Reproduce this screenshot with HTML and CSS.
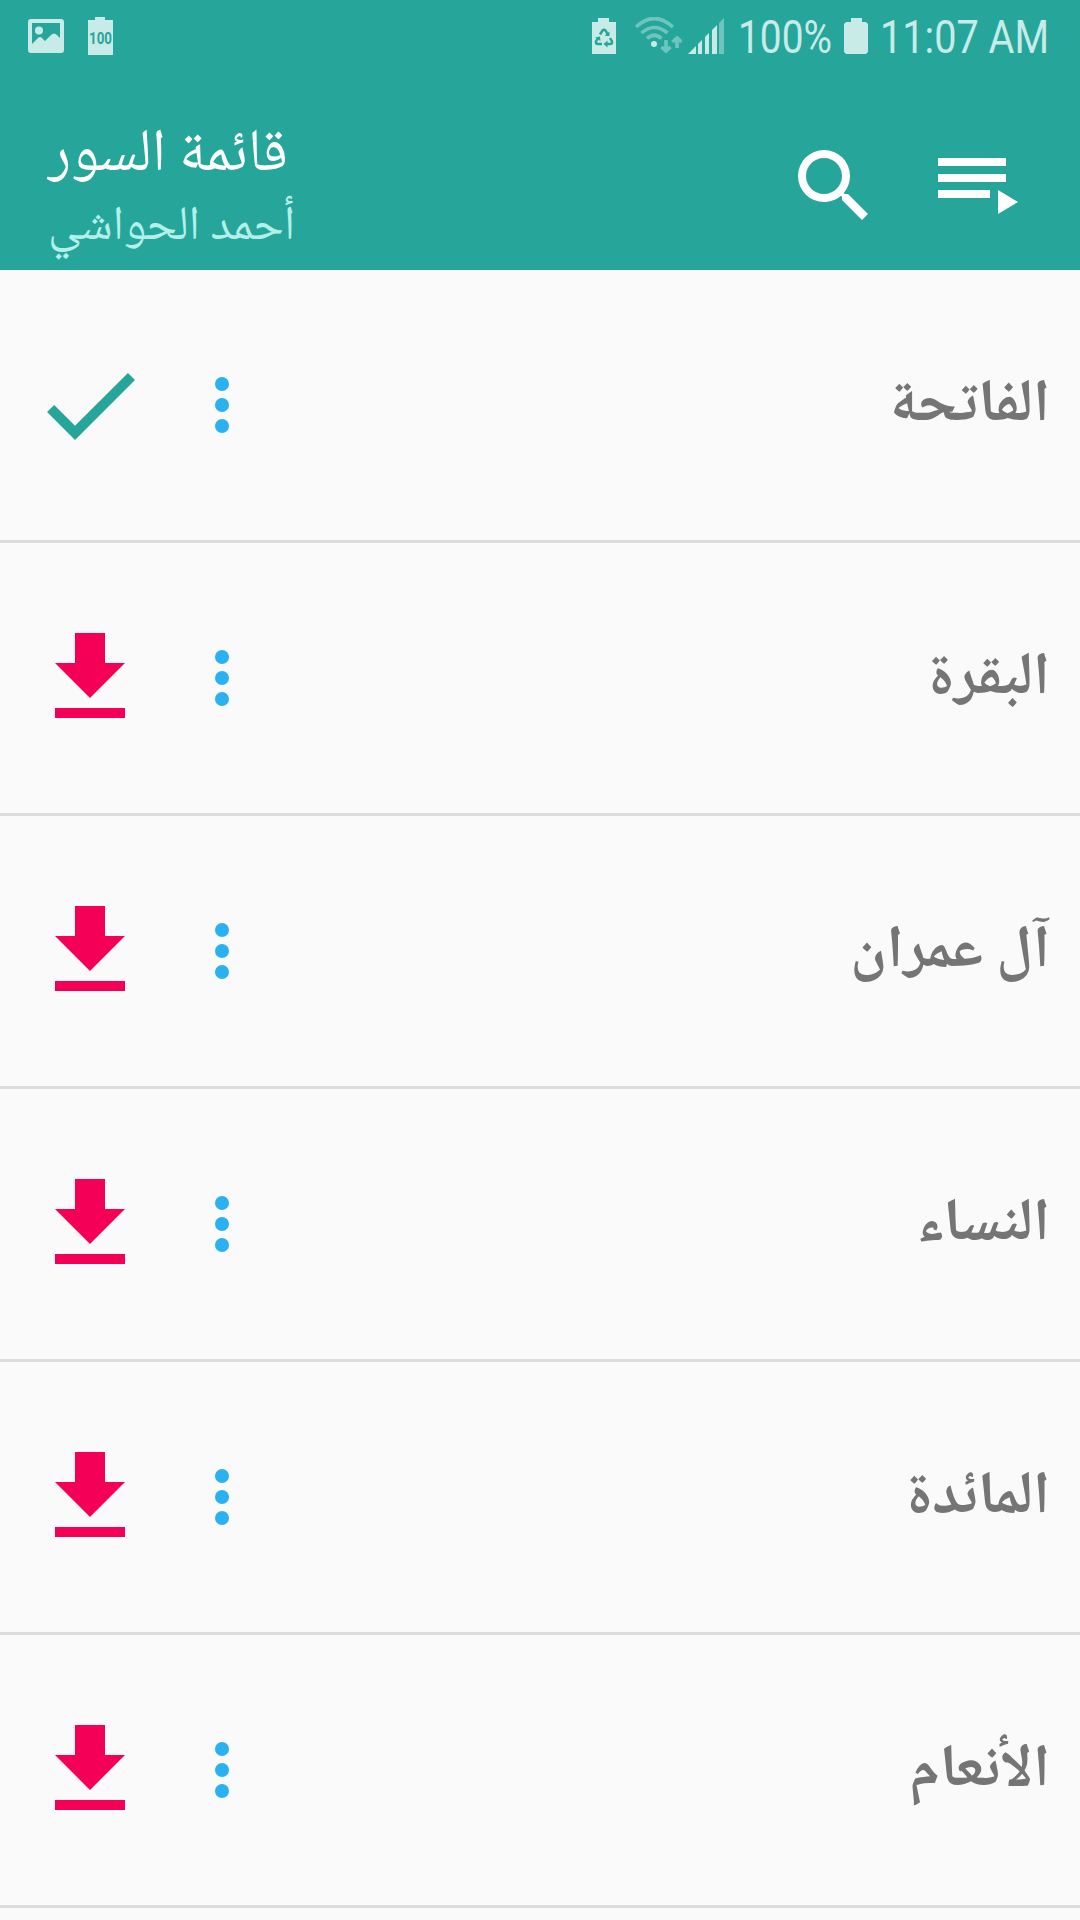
FILE: index.html
```html
<!DOCTYPE html>
<html lang="ar">
<head>
    <meta charset="UTF-8">
    <meta name="viewport" content="width=device-width, initial-scale=1.0">
    <title>قائمة السور</title>
    <link rel="stylesheet" href="styles.css">
</head>
<body>
    <header class="header">
        <div class="status-bar">
            <svg class="status-image" width="36" height="34" viewBox="0 0 36 34">
                <path fill-rule="evenodd" d="M3 0h30a3 3 0 0 1 3 3v28a3 3 0 0 1-3 3H3a3 3 0 0 1-3-3V3a3 3 0 0 1 3-3zM4 4v21l6-6q2-2 4 0l3 3 6-6q3-3 6 0l3 3V4z"/>
                <circle cx="11" cy="11.500" r="4"/>
            </svg>
            <svg class="status-level" width="25" height="38" viewBox="0 0 25 38">
                <path d="M7 0h10v3h8v35H0V3h7z"/>
                <text class="level-text" x="1" y="27" textLength="23" lengthAdjust="spacingAndGlyphs">100</text>
            </svg>
            <div class="status-right">
                <svg width="24" height="36" viewBox="0 0 24 36">
                    <path d="M6 0h11v4h7v32H0V4h6z"/>
                    <g class="recycle">
                        <path d="M8 16.500l2.500-4q1.500-1.500 3 0l2 3.500"/>
                        <path d="M18 20l2 3.500q.5 2.500-2 2.500h-3.500"/>
                        <path d="M10 26H6q-2.500 0-2-2.500l2-3.500"/>
                    </g>
                    <path class="recycle-tips" d="M17.500 13.500v4.500h-5zM15.500 22.500v7l-4-3.500zM3 19.500l5-1 .5 4.500z"/>
                </svg>
                <svg class="wifi" width="48" height="38" viewBox="0 0 48 38">
                    <g class="wifi-waves">
                        <path d="M2 10Q20-7 39 10M7.500 16Q20 5 33.500 16M13 21.500Q20 15 27.500 21.500"/>
                        <path d="M32 23v11M27.500 30l4.500 4 4.500-4M43 31V21M38.500 25l4.500-4 4.500 4"/>
                    </g>
                    <circle cx="20" cy="27" r="3"/>
                </svg>
                <svg class="signal" width="36" height="36" viewBox="0 0 36 36">
                    <path d="M0 36l8-8v8zM10 26l4-4v14h-4zM17 19l4-4v21h-4zM24 12l5-5v29h-5z"/>
                    <path class="dim" d="M31 5l5-5v36h-5z"/>
                </svg>
                <svg class="percent" width="96" height="60" viewBox="0 0 96 60">
                    <text class="status-text" x="1" y="43" textLength="94" lengthAdjust="spacingAndGlyphs">100%</text>
                </svg>
                <svg class="battery" width="24" height="36" viewBox="0 0 24 36">
                    <path d="M7 0h11v4h4l2 2v28l-2 2H2l-2-2V6l2-2h5z"/>
                </svg>
                <svg class="clock" width="172" height="60" viewBox="0 0 172 60">
                    <text class="status-text" x="0" y="43" textLength="169" lengthAdjust="spacingAndGlyphs">11:07 AM</text>
                </svg>
            </div>
        </div>
        <div class="toolbar">
            <div class="titles">
                <h1 class="title" dir="rtl">قائمة السور</h1>
                <p class="subtitle" dir="rtl">أحمد الحواشي</p>
            </div>
            <div class="actions">
                <svg class="action" viewBox="0 0 24 24"><path d="M15.500 14h-.79l-.28-.27A6.471 6.471 0 0 0 16 9.500 6.500 6.500 0 1 0 9.500 16c1.610 0 3.090-.59 4.230-1.570l.27.28v.79l5 4.990L20.490 19l-4.990-5zm-6 0C7.010 14 5 11.990 5 9.500S7.010 5 9.500 5 14 7.010 14 9.500 11.990 14 9.500 14z"/></svg>
                <svg class="action" viewBox="0 0 24 24"><path d="M19 9H2v2h17V9zm0-4H2v2h17V5zM2 15h13v-2H2v2zm15-2v6l5-3-5-3z"/></svg>
            </div>
        </div>
    </header>

    <svg class="defs">
        <symbol id="download" viewBox="0 0 24 24"><path d="M19 9h-4V3H9v6H5l7 7 7-7zM5 18v2h14v-2H5z"/></symbol>
        <symbol id="check" viewBox="0 0 24 24"><path d="M9 16.170L4.830 12l-1.420 1.410L9 19 21 7l-1.410-1.410z"/></symbol>
        <symbol id="more" viewBox="0 0 24 24"><circle cx="12" cy="6" r="2"/><circle cx="12" cy="12" r="2"/><circle cx="12" cy="18" r="2"/></symbol>
    </svg>

    <main class="list">
        <div class="row">
            <svg class="state done"><use href="#check"/></svg>
            <svg class="more"><use href="#more"/></svg>
            <span class="name" dir="rtl">الفاتحة</span>
        </div>
        <div class="row">
            <svg class="state"><use href="#download"/></svg>
            <svg class="more"><use href="#more"/></svg>
            <span class="name" dir="rtl">البقرة</span>
        </div>
        <div class="row">
            <svg class="state"><use href="#download"/></svg>
            <svg class="more"><use href="#more"/></svg>
            <span class="name" dir="rtl">آل عمران</span>
        </div>
        <div class="row">
            <svg class="state"><use href="#download"/></svg>
            <svg class="more"><use href="#more"/></svg>
            <span class="name" dir="rtl">النساء</span>
        </div>
        <div class="row">
            <svg class="state"><use href="#download"/></svg>
            <svg class="more"><use href="#more"/></svg>
            <span class="name" dir="rtl">المائدة</span>
        </div>
        <div class="row">
            <svg class="state"><use href="#download"/></svg>
            <svg class="more"><use href="#more"/></svg>
            <span class="name" dir="rtl">الأنعام</span>
        </div>
    </main>
</body>
</html>
```
FILE: styles.css
```css
:root {
    --teal: #26a69a;
    --pink: #f50057;
    --blue: #29b1f2;
    --background: #fafafa;
    --status: #c8ebe8;
}

* {
    margin: 0;
    padding: 0;
    box-sizing: border-box;
}

body {
    width: 1080px;
    height: 1920px;
    overflow: hidden;
    background: var(--background);
    font-family: 'Noto Naskh Arabic', 'DejaVu Sans', sans-serif;
}

svg {
    display: block;
    flex: none;
}

.defs {
    display: none;
}

.header {
    height: 270px;
    background: var(--teal);
}

.status-bar {
    height: 72px;
    display: flex;
    align-items: flex-start;
    padding: 17px 28px 0;
    fill: var(--status);
}

.status-image {
    margin-top: 2px;
}

.status-level {
    margin-left: 24px;
}

.level-text {
    font: 700 16px Roboto, sans-serif;
    fill: var(--teal);
}

.status-right {
    display: flex;
    margin-left: auto;
    padding-top: 1px;
}

.recycle {
    fill: none;
    stroke: var(--teal);
    stroke-width: 2.5;
}

.recycle-tips {
    fill: var(--teal);
}

.wifi {
    margin: -1px 0 0 18px;
}

.wifi-waves {
    fill: none;
    stroke: #6fc5bd;
    stroke-width: 3.6;
}

.signal {
    margin-left: 6px;
}

.dim {
    fill: #6fc5bd;
}

.percent {
    margin: -8px 0 0 13px;
}

.battery {
    margin-left: 11px;
}

.clock {
    margin: -8px 0 0 12px;
}

.status-text {
    font: 400 46px Roboto, sans-serif;
}

.toolbar {
    height: 198px;
    display: flex;
    justify-content: space-between;
    padding: 48px 54px 0 48px;
}

.titles {
    color: #fff;
}

.title {
    font-size: 60px;
    font-weight: 400;
    line-height: 74px;
    text-align: left;
}

.subtitle {
    font-size: 48px;
    line-height: 70px;
    color: #b3f0ea;
}

.actions {
    display: flex;
    gap: 48px;
    margin-top: 18px;
    fill: #fff;
}

.action {
    width: 96px;
    height: 96px;
}

.row {
    height: 273px;
    display: flex;
    align-items: center;
    padding: 0 30px;
    border-bottom: 3px solid #dcdcdc;
}

.state {
    width: 120px;
    height: 120px;
    fill: var(--pink);
}

.done {
    fill: var(--teal);
}

.more {
    width: 84px;
    height: 84px;
    margin-left: 30px;
    fill: var(--blue);
}

.name {
    margin: 5px 0 0 auto;
    font-size: 60px;
    font-weight: 700;
    line-height: 80px;
    color: #757575;
}
```
